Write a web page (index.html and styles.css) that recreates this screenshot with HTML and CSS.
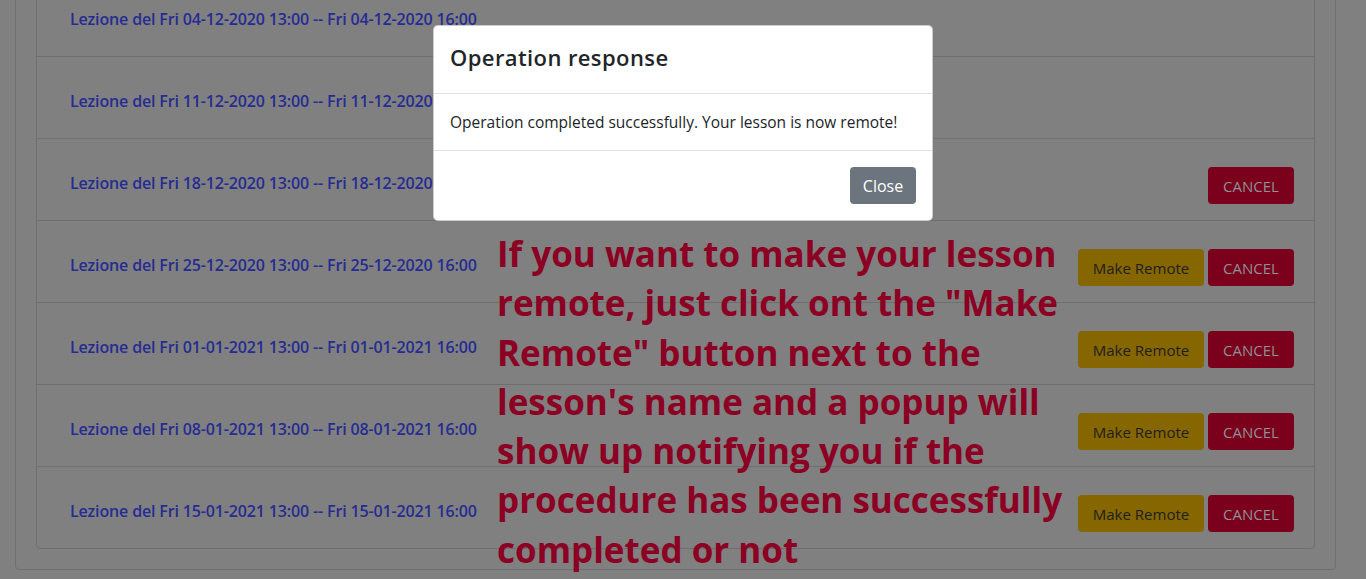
FILE: index.html
```html
<!DOCTYPE html>
<html>
<head>
<meta charset="utf-8">
<link rel="stylesheet" href="styles.css">
</head>
<body>
<div class="page">
  <div class="card">
    <ul class="lessons">
      <li class="row"><span class="lesson">Lezione del Fri 04-12-2020 13:00 -- Fri 04-12-2020 16:00</span></li>
      <li class="row"><span class="lesson">Lezione del Fri 11-12-2020 13:00 -- Fri 11-12-2020 16:00</span></li>
      <li class="row"><span class="lesson">Lezione del Fri 18-12-2020 13:00 -- Fri 18-12-2020 16:00</span>
        <div class="actions"><button class="btn cancel">CANCEL</button></div></li>
      <li class="row"><span class="lesson">Lezione del Fri 25-12-2020 13:00 -- Fri 25-12-2020 16:00</span>
        <div class="actions"><button class="btn remote">Make Remote</button><button class="btn cancel">CANCEL</button></div></li>
      <li class="row"><span class="lesson">Lezione del Fri 01-01-2021 13:00 -- Fri 01-01-2021 16:00</span>
        <div class="actions"><button class="btn remote">Make Remote</button><button class="btn cancel">CANCEL</button></div></li>
      <li class="row"><span class="lesson">Lezione del Fri 08-01-2021 13:00 -- Fri 08-01-2021 16:00</span>
        <div class="actions"><button class="btn remote">Make Remote</button><button class="btn cancel">CANCEL</button></div></li>
      <li class="row"><span class="lesson">Lezione del Fri 15-01-2021 13:00 -- Fri 15-01-2021 16:00</span>
        <div class="actions"><button class="btn remote">Make Remote</button><button class="btn cancel">CANCEL</button></div></li>
    </ul>
  </div>
</div>

<p class="note">If you want to make your lesson remote, just click ont the "Make Remote" button next to the lesson's name and a popup will show up notifying you if the procedure has been successfully completed or not</p>

<div class="modal">
  <div class="modal-header"><h5 class="modal-title">Operation response</h5></div>
  <div class="modal-body">Operation completed successfully. Your lesson is now remote!</div>
  <div class="modal-footer"><button class="btn close">Close</button></div>
</div>
</body>
</html>
```
FILE: styles.css
```css
html, body {
  margin: 0;
  padding: 0;
  height: 100%;
  overflow: hidden;
}
body {
  background: #808080;
  font-family: "Open Sans", "Noto Sans", sans-serif;
  color: #212529;
}
.page {
  padding: 0 30px 0 15px;
}
.card {
  margin-top: -48px;
  border: 1px solid #6f6f6f;
  border-radius: 4px;
  padding: 20px;
}
.lessons {
  list-style: none;
  margin: 0;
  padding: 0;
  border: 1px solid #6f6f6f;
  border-radius: 4px;
}
.row {
  box-sizing: border-box;
  height: 82px;
  display: flex;
  align-items: center;
  justify-content: space-between;
  padding: 12px 20px 0 33px;
  border-top: 1px solid #6f6f6f;
}
.row:first-child { border-top: none; height: 82px; }
.lesson {
  color: #262c92;
  font-size: 16px;
  font-weight: 600;
  letter-spacing: -0.15px;
  margin-bottom: 5px;
}
.actions {
  display: flex;
  gap: 4px;
}
.btn {
  font-family: "Open Sans", "Noto Sans", sans-serif;
  font-size: 15px;
  height: 37px;
  border: none;
  border-radius: 4px;
  padding: 0 12px;
  cursor: pointer;
}
.remote {
  width: 126px;
  background: #856600;
  color: #1f1f1f;
}
.cancel {
  width: 86px;
  background: #7a001b;
  color: #8f8f96;
}
.note {
  position: absolute;
  left: 497px;
  top: 229px;
  width: 600px;
  margin: 0;
  font-family: "Open Sans", "Noto Sans", sans-serif;
  font-size: 35px;
  font-weight: 700;
  line-height: 49.3px;
  color: #8b0023;
}
.modal {
  position: absolute;
  left: 433px;
  top: 25px;
  width: 498px;
  background: #fff;
  border: 1px solid rgba(0,0,0,.2);
  border-radius: 5px;
}
.modal-header {
  padding: 14px 16px 18px;
  border-bottom: 1px solid #dee2e6;
}
.modal-title {
  margin: 0;
  font-size: 22px;
  font-weight: 600;
  letter-spacing: 0.4px;
  line-height: 35px;
  color: #212529;
}
.modal-body {
  padding: 16px 16px 16px;
  font-size: 15.5px;
  line-height: 24px;
  border-bottom: 1px solid #dee2e6;
}
.modal-footer {
  display: flex;
  justify-content: flex-end;
  padding: 16px;
}
.close {
  width: 66px;
  background: #6c757d;
  color: #fff;
  font-size: 16px;
}
```
